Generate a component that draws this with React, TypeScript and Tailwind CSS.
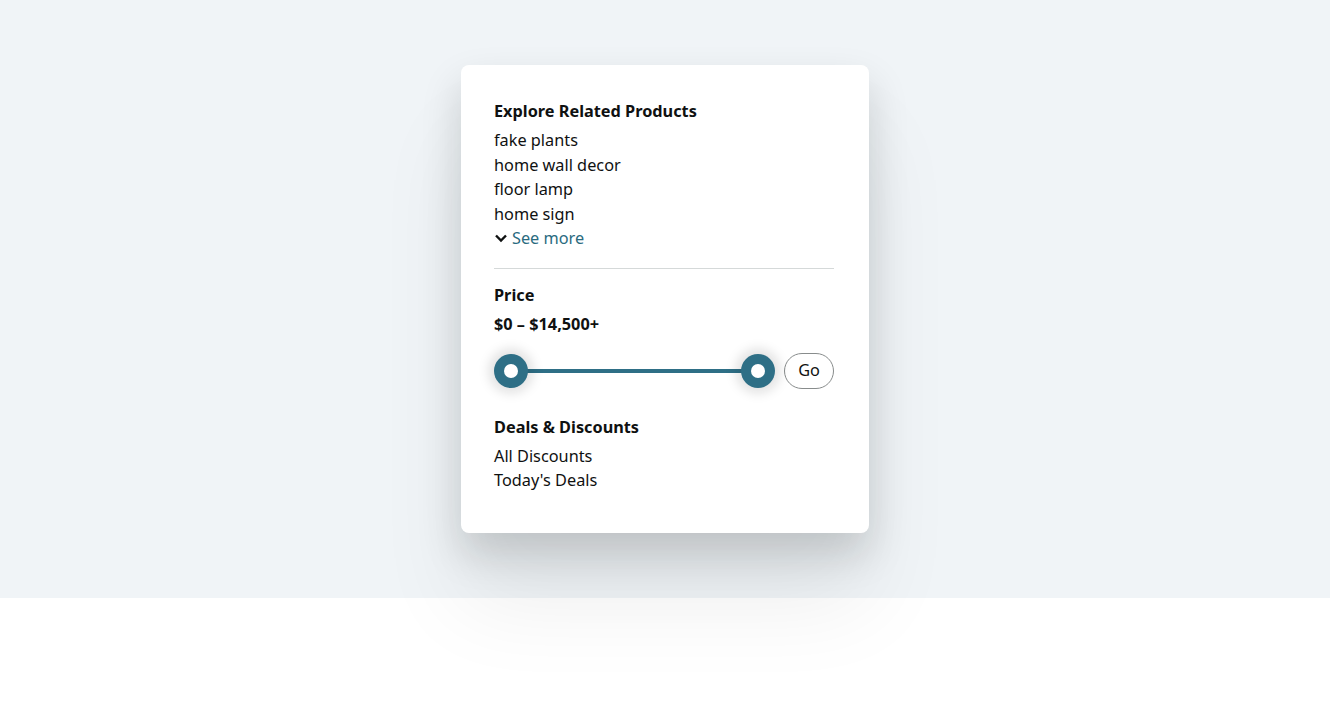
export default function App() {
  const font = { fontFamily: '"Noto Sans", "Open Sans", sans-serif' };
  return (
    <div className="min-h-[713px] bg-white text-[#0f1111]" style={font}>
      <div className="h-[598px] bg-[#f0f4f7] flex justify-center pt-[65px]">
        <div className="w-[408px] h-[468px] bg-white rounded-[8px] shadow-[0_20px_40px_rgba(15,17,17,0.16),0_70px_90px_rgba(15,17,17,0.07)] pl-[33px] pr-[35px] pt-[34px]">
          <div className="text-[16.3px] leading-[24px] font-bold">Explore Related Products</div>
          <ul className="mt-[5px] text-[16.3px] leading-[24.5px]">
            <li>fake plants</li>
            <li>home wall decor</li>
            <li>floor lamp</li>
            <li>home sign</li>
            <li className="flex items-center gap-[4px] text-[#2a6b80]">
              <svg width="14" height="14" viewBox="0 0 14 14" className="text-[#0f1111]">
                <path d="M2 4.5 L7 9.5 L12 4.5" fill="none" stroke="currentColor" strokeWidth="2.4" />
              </svg>
              <span>See more</span>
            </li>
          </ul>
          <div className="mt-[17px] h-px bg-[#d5d9d9]" />
          <div className="mt-[14px] text-[16.3px] leading-[24px] font-bold">Price</div>
          <div className="mt-[5px] text-[16.3px] leading-[24px] font-bold">$0 – $14,500+</div>
          <div className="mt-[17px] flex items-center h-[36px]">
            <div className="relative w-[281px] h-[36px]">
              <div className="absolute left-[16px] right-[16px] top-[16px] h-[4px] bg-[#2e6f86]" />
              <div className="absolute left-0 top-[1px] w-[34px] h-[34px] rounded-full bg-[#2e6f86] flex items-center justify-center shadow-[0_0_12px_5px_rgba(15,17,17,0.13)]">
                <div className="w-[14px] h-[14px] rounded-full bg-white" />
              </div>
              <div className="absolute left-[247px] top-[1px] w-[34px] h-[34px] rounded-full bg-[#2e6f86] flex items-center justify-center shadow-[0_0_12px_5px_rgba(15,17,17,0.13)]">
                <div className="w-[14px] h-[14px] rounded-full bg-white" />
              </div>
            </div>
            <button className="ml-[10px] w-[50px] h-[36px] rounded-full border border-[#888c8c] bg-white text-[16.3px] leading-none">Go</button>
          </div>
          <div className="mt-[26px] text-[16.3px] leading-[24px] font-bold">Deals &amp; Discounts</div>
          <ul className="mt-[5px] text-[16.3px] leading-[24.5px]">
            <li>All Discounts</li>
            <li>Today's Deals</li>
          </ul>
        </div>
      </div>
    </div>
  );
}
